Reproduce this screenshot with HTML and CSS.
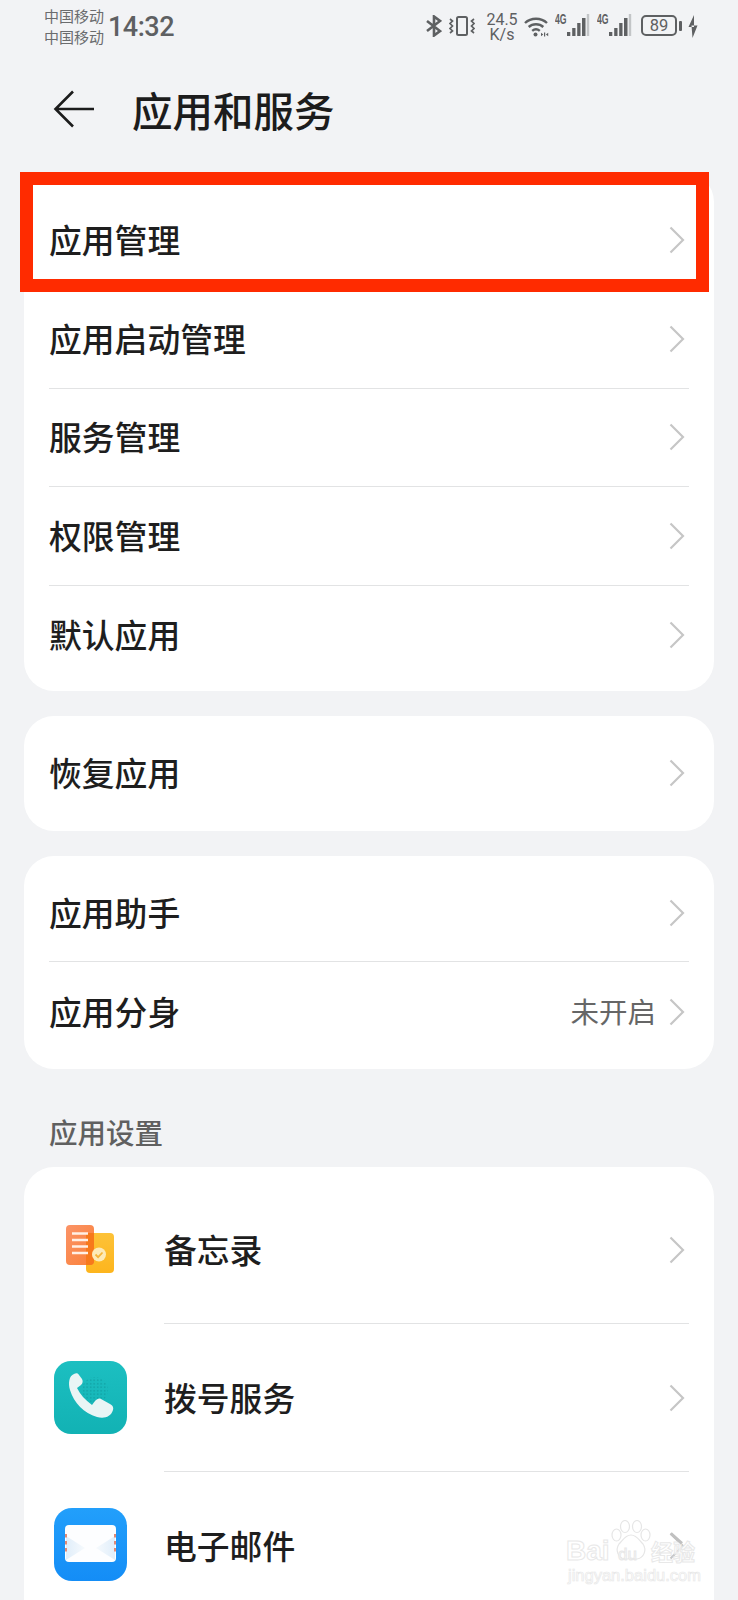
FILE: index.html
```html
<!DOCTYPE html>
<html lang="zh-CN">
<head>
<meta charset="utf-8">
<title>应用和服务</title>
<link rel="stylesheet" href="styles.css">
</head>
<body>
<svg class="defs" width="0" height="0" aria-hidden="true">
  <symbol id="chev" viewBox="0 0 16 28"><path d="M1.500 1.500 14 14 1.500 26.500" fill="none" stroke="#c6c6c6" stroke-width="2.200"/></symbol>
  <symbol id="bars" viewBox="0 0 24 22"><path d="M0 18h3.300v4H0zM5.200 14h3.300v8H5.200zM10.200 9h3.300v13h-3.300zM15 4h3.500v18H15z" fill="#5e6062"/><path d="M19.800 0h2.400v22h-2.400z" fill="#c3c5c7"/></symbol>
</svg>
<header class="status">
  <div class="carriers"><span>中国移动</span><span>中国移动</span></div>
  <div class="clock">14:32</div>
  <div class="status-icons">
    <svg class="ic-bt" width="16" height="22" viewBox="0 0 16 22"><path d="M1 6 14 16 8 20.500V1.500L14 6 1 16" fill="none" stroke="#5e6062" stroke-width="2.600"/></svg>
    <svg class="ic-vib" width="26" height="20" viewBox="0 0 26 20"><rect x="8" y="1" width="10" height="18" rx="1.500" fill="none" stroke="#5e6062" stroke-width="2"/><path d="M1 3l2.500 2-2.500 2.500L3.500 10 1 12.500 3.500 15 1 17M25 3l-2.500 2 2.500 2.500L22.500 10l2.500 2.500-2.500 2.500 2.500 2" fill="none" stroke="#5e6062" stroke-width="1.700"/></svg>
    <div class="speed"><span>24.5</span><span>K/s</span></div>
    <svg class="ic-wifi" width="25" height="21" viewBox="0 0 25 21"><path d="M1 7C7 1.300 17 1.300 23 7M4.700 11C8.700 7.300 15.300 7.300 19.300 11M8.200 14.800C10.500 12.800 13.500 12.800 15.800 14.800" fill="none" stroke="#5e6062" stroke-width="2.400"/><circle cx="11.500" cy="18.500" r="2" fill="#5e6062"/><path d="M20 16.500v4h1.200v-4zM19.300 18.500l-2.300-1.700v3.400zM21.900 18.500l2.300-1.700v3.400z" fill="#5e6062"/></svg>
    <div class="net"><b>4G</b><svg class="bars"><use href="#bars"/></svg></div>
    <div class="net"><b>4G</b><svg class="bars"><use href="#bars"/></svg></div>
    <div class="battery"><span class="batt-body">89</span><span class="batt-nub"></span></div>
    <svg class="ic-bolt" width="10" height="23" viewBox="0 0 10 23"><path d="M6 0 .5 12H6zM3.500 10.500h6L4.500 23z" fill="#5e6062"/></svg>
  </div>
</header>

<nav class="titlebar">
  <svg class="back" width="42" height="38" viewBox="0 0 42 38"><path d="M20 1.500 2.500 19 20 36.500M2.500 19H41" fill="none" stroke="#1c1c1c" stroke-width="2.600"/></svg>
  <h1>应用和服务</h1>
</nav>

<main>
  <section class="card first">
    <div class="row"><div class="row-body"><span class="label">应用管理</span><svg class="chev"><use href="#chev"/></svg></div></div>
    <div class="row"><div class="row-body"><span class="label">应用启动管理</span><svg class="chev"><use href="#chev"/></svg></div></div>
    <div class="row"><div class="row-body"><span class="label">服务管理</span><svg class="chev"><use href="#chev"/></svg></div></div>
    <div class="row"><div class="row-body"><span class="label">权限管理</span><svg class="chev"><use href="#chev"/></svg></div></div>
    <div class="row"><div class="row-body"><span class="label">默认应用</span><svg class="chev"><use href="#chev"/></svg></div></div>
  </section>
  <section class="card">
    <div class="row"><div class="row-body"><span class="label">恢复应用</span><svg class="chev"><use href="#chev"/></svg></div></div>
  </section>
  <section class="card">
    <div class="row"><div class="row-body"><span class="label">应用助手</span><svg class="chev"><use href="#chev"/></svg></div></div>
    <div class="row"><div class="row-body"><span class="label">应用分身</span><span class="value">未开启</span><svg class="chev"><use href="#chev"/></svg></div></div>
  </section>
  <h2 class="section-title">应用设置</h2>
  <section class="card apps">
    <div class="row app">
      <svg class="app-icon" width="73" height="73" viewBox="0 0 73 73">
        <defs>
          <linearGradient id="ny" x1="0" y1="0" x2="0" y2="1"><stop offset="0" stop-color="#fdc238"/><stop offset="1" stop-color="#fdb51d"/></linearGradient>
          <linearGradient id="no" x1="0" y1="0" x2="1" y2="1"><stop offset="0" stop-color="#fb9367"/><stop offset="1" stop-color="#fa8138"/></linearGradient>
        </defs>
        <rect x="32" y="20" width="28" height="40" rx="4" fill="url(#ny)"/>
        <rect x="12" y="12" width="28" height="40" rx="4" fill="url(#no)"/>
        <path d="M32 20h8v28a4 4 0 0 1-4 4h-4z" fill="#f7791b"/>
        <path d="M18 20.500h16M18 27h16M18 33.500h16M18 40h16" stroke="#fff0e4" stroke-width="2.400"/>
        <circle cx="45" cy="41.500" r="7" fill="#fdeab8"/>
        <path d="M41.500 41.500l2.600 2.600 4.400-4.600" fill="none" stroke="#f5b53a" stroke-width="1.800"/>
      </svg>
      <div class="row-body"><span class="label">备忘录</span><svg class="chev"><use href="#chev"/></svg></div>
    </div>
    <div class="row app">
      <svg class="app-icon" width="73" height="73" viewBox="0 0 73 73">
        <defs>
          <linearGradient id="tg" x1="0" y1="0" x2="0" y2="1"><stop offset="0" stop-color="#1cbfc1"/><stop offset="1" stop-color="#12b2b4"/></linearGradient>
          <pattern id="dots" width="3.500" height="3.500" patternUnits="userSpaceOnUse"><circle cx="1.700" cy="1.700" r=".7" fill="#0d9497"/></pattern>
        </defs>
        <rect width="73" height="73" rx="17" fill="url(#tg)"/>
        <circle cx="41" cy="29" r="13" fill="url(#dots)"/>
        <path d="M20 13C15 15 14 22 16 29 20 42 30 52 43 56c7 2 14 0 16-7 1-3-1-5-3-6l-9-5c-2-1-4 0-6 2l-3 4C31 39 26 33 23 27l4-3c2-2 2-4 1-6l-3-4c-1-2-3-2-5-1z" fill="#e9f5f5"/>
      </svg>
      <div class="row-body"><span class="label">拨号服务</span><svg class="chev"><use href="#chev"/></svg></div>
    </div>
    <div class="row app">
      <svg class="app-icon" width="73" height="73" viewBox="0 0 73 73">
        <defs>
          <linearGradient id="bg" x1="0" y1="0" x2="0" y2="1"><stop offset="0" stop-color="#229ffb"/><stop offset="1" stop-color="#148df6"/></linearGradient>
          <linearGradient id="envl" x1="0" y1="0" x2="1" y2="0"><stop offset="0" stop-color="#e0eefa"/><stop offset="1" stop-color="#f6fafd"/></linearGradient>
          <linearGradient id="envr" x1="1" y1="0" x2="0" y2="0"><stop offset="0" stop-color="#e0eefa"/><stop offset="1" stop-color="#f6fafd"/></linearGradient>
        </defs>
        <rect width="73" height="73" rx="18" fill="url(#bg)"/>
        <rect x="11" y="17" width="51" height="37" rx="4" fill="#fdfeff"/>
        <path d="M12 28 31 40 12 52z" fill="url(#envl)"/>
        <path d="M61 28 42 40 61 52z" fill="url(#envr)"/>
        <path d="M12 26v3.500M12 33v3.500M12 40v3.500M61 26v3.500M61 33v3.500M61 40v3.500" stroke="#e08a78" stroke-width="2"/>
      </svg>
      <div class="row-body"><span class="label">电子邮件</span><svg class="chev"><use href="#chev"/></svg></div>
    </div>
  </section>
</main>

<div class="highlight"></div>

<div class="watermark">
  <svg class="paw" width="40" height="41" viewBox="0 0 40 41"><g fill="rgba(255,255,255,.7)" stroke="#e6e6e6" stroke-width="1.200"><ellipse cx="5.500" cy="15" rx="4.500" ry="6"/><ellipse cx="14" cy="6.500" rx="4.500" ry="6"/><ellipse cx="26" cy="6.500" rx="4.500" ry="6"/><ellipse cx="34.500" cy="15" rx="4.500" ry="6"/><path d="M20 15c6 0 8 5 12 9 4 6 1 14-6 15-3 .5-4-1-6-1s-3 1.500-6 1C7 38 4 30 8 24c4-4 6-9 12-9z"/></g></svg>
  <div class="wm-line"><span class="wm-bai">Bai</span><span class="wm-du">du</span><span class="wm-cn">经验</span></div>
  <div class="wm-url">jingyan.baidu.com</div>
  <span class="wm-slash"></span>
</div>
</body>
</html>
```

FILE: styles.css
```css
* { box-sizing: border-box; }
html, body { margin: 0; height: 1600px; overflow: hidden; }
body {
  position: relative;
  background: #f2f3f5;
  color: #1e1e1e;
  font-family: "Noto Sans CJK SC", "Noto Sans", sans-serif;
}
.defs { position: absolute; }

/* status bar */
.status {
  height: 54px;
  display: flex;
  align-items: center;
  padding-left: 44px;
  color: #5e6062;
}
.carriers {
  display: flex;
  flex-direction: column;
  margin-top: -2px;
  font-size: 15px;
  line-height: 21px;
  color: #6a6c6e;
}
.clock {
  margin-left: 4px;
  font: 500 27px/30px Roboto, sans-serif;
  letter-spacing: -.5px;
}
.status-icons {
  align-self: flex-start;
  margin-left: auto;
  margin-right: 40px;
  padding-top: 13px;
  display: flex;
  align-items: flex-start;
}
.ic-bt { margin: 2px 7px 0 0; }
.ic-vib { margin: 3px 11px 0 0; }
.speed {
  display: flex;
  flex-direction: column;
  align-items: center;
  width: 32px;
  margin: -1px 6px 0 0;
  font: 400 16px/15px Roboto, sans-serif;
}
.ic-wifi { margin: 3px 6px 0 0; }
.net { display: flex; align-items: flex-start; margin: 1px 6px 0 0; }
.net + .net { margin-right: 8px; }
.net b {
  width: 12px;
  font: 700 14px/11px "Liberation Sans", sans-serif;
  transform: scaleX(.62);
  transform-origin: left;
  white-space: nowrap;
}
.bars { width: 24px; height: 22px; }
.battery { display: flex; align-items: center; margin-top: 2px; }
.batt-body {
  width: 36px;
  height: 21px;
  border: 2px solid #5e6062;
  border-radius: 5px;
  text-align: center;
  font: 400 16.500px/17px Roboto, sans-serif;
}
.batt-nub { width: 2.500px; height: 10px; margin-left: 2px; background: #5e6062; border-radius: 1px; }
.ic-bolt { margin: 2px 0 0 6.500px; }

/* title */
.titlebar {
  height: 112px;
  padding: 0 0 0 53px;
  display: flex;
  align-items: center;
  margin-bottom: 6px;
}
.back { flex: none; margin-bottom: 3px; }
h1 {
  margin: 0 0 0 37px;
  font-size: 40.500px;
  line-height: 52px;
  font-weight: 500;
  color: #1c1c1c;
}

/* cards */
main { display: flex; flex-direction: column; }
.card {
  margin: 25px 24px 0;
  padding: 8.250px 25px;
  background: #fff;
  border-radius: 30px;
}
.card.first { margin-top: 0; padding: 19.500px 25px 6.500px; }
.card.apps { padding: 9px 25px 8px 30px; }
.row { display: flex; align-items: stretch; }
.row-body {
  flex: 1;
  min-width: 0;
  height: 98.500px;
  display: flex;
  align-items: center;
  border-bottom: 1px solid #e2e3e4;
}
.row:last-child .row-body { border-bottom: 0; }
.label { margin-top: -2px; font-size: 32.800px; line-height: 44px; font-weight: 500; color: #1e1e1e; }
.value { margin: -1px 0 0 auto; font-size: 28.500px; line-height: 40px; color: #666; }
.chev { width: 16px; height: 28px; margin-left: auto; margin-right: 4px; flex: none; }
.value + .chev { margin-left: 13px; }
.app { align-items: center; }
.app .row-body { height: 148px; margin-left: 37px; }
.app-icon { flex: none; margin-bottom: 2px; }
.app:last-child .app-icon { margin-bottom: 4px; }
.section-title {
  margin: 0;
  padding: 43px 0 15px 49px;
  font-size: 28.500px;
  line-height: 40px;
  font-weight: 500;
  color: #606060;
}
.section-title + .card { margin-top: 0; }

/* overlay annotation */
.highlight {
  position: absolute;
  left: 20px;
  top: 172px;
  width: 689px;
  height: 120px;
  border: 13.500px solid #ff2b00;
}

/* watermark */
.watermark {
  position: absolute;
  left: 566px;
  top: 1520px;
  width: 134px;
  height: 64px;
  font-family: "Liberation Sans", sans-serif;
}
.paw { position: absolute; left: 45px; top: 0; }
.wm-line { position: absolute; left: 0; top: 15px; display: flex; align-items: baseline; white-space: nowrap; }
.wm-bai, .wm-du, .wm-url, .wm-cn {
  color: rgba(255,255,255,.8);
  -webkit-text-stroke: 1px #e8e8e8;
}
.wm-bai { width: 52px; font-size: 28px; line-height: 30px; font-weight: 700; }
.wm-du { width: 33px; font-size: 17px; line-height: 30px; }
.wm-cn { font: 700 22px/30px "Noto Sans CJK SC", sans-serif; }
.wm-url { position: absolute; left: 2px; top: 46px; font-size: 16.500px; line-height: 18px; white-space: nowrap; -webkit-text-stroke-width: .7px; }
.wm-slash {
  position: absolute;
  left: 103px;
  top: 17px;
  width: 15px;
  height: 2.500px;
  background: #c0c0c0;
  transform: rotate(42deg);
}
```
